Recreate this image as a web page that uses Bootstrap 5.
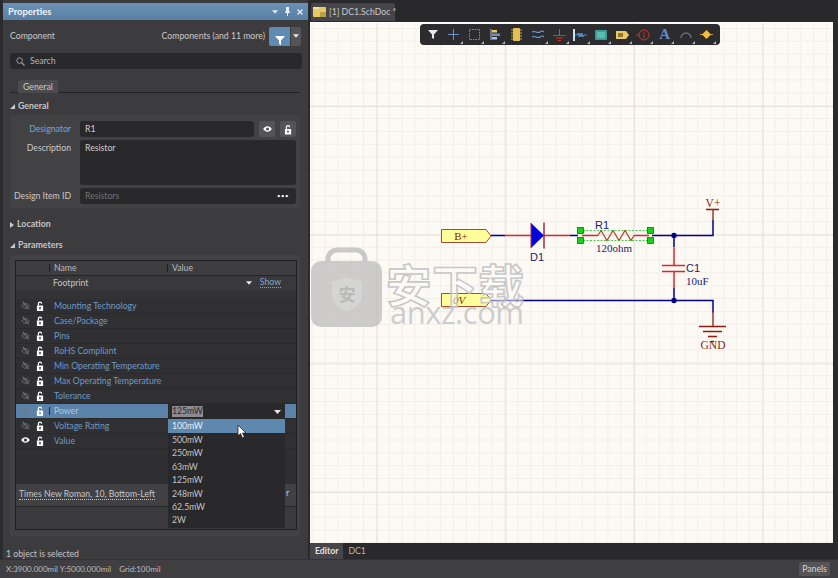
<!DOCTYPE html>
<html lang="en">
<head>
<meta charset="utf-8">
<title>Properties</title>
<link href="https://cdn.jsdelivr.net/npm/bootstrap@5.3.0/dist/css/bootstrap.min.css" rel="stylesheet">
<style>
html,body{margin:0;height:578px;width:838px;overflow:hidden}
body{background:#2b2a2d;font-family:Lato,"Open Sans","Liberation Sans",sans-serif;font-size:8.700px;line-height:1;color:#c9c9cb}
.app-main{height:559px}
.side{padding-top:3px;background:#3c3b3e;margin-right:2px;position:relative;margin-left:3px;width:305px;flex:none}
.side-title{height:17px;background:linear-gradient(#6b92b6,#587fa4);color:#eef3f8;font-weight:700;font-size:9.400px;padding:0 5px}
.side-title svg{margin-left:6px}
.comp-row{height:20px;margin:6px 7px 0 7px}
.filter-btn{width:21px;height:19px;background:#5f8ab2;border:0;padding:0;border-radius:2px 0 0 2px}
.filter-drop{width:10px;height:19px;background:#545357;border:0;padding:0;border-radius:0 2px 2px 0;margin-left:1px}
.search-box{height:16px;margin:7px 6px 0 7px;background:#29282b;border-radius:3px;padding-left:6px;gap:5px;color:#b5b5b7}
.tabs-wrap.nav-tabs{margin:11px 8px 0 7px;border-bottom:1px solid #232225;height:13px;padding-left:8px;--bs-nav-tabs-border-width:0}
.tabs-wrap .nav-link,.tabs-wrap .nav-link.active{background:#4b4a4e;color:#c9c9cb;font-size:8.700px;padding:3px 5px 0;height:13px;border-radius:2px 2px 0 0;border:0}
.sec-head{height:13px;margin-left:7px;margin-top:7px;font-weight:700;color:#c4c4c8;gap:3px;font-size:8.800px}
.sec-head.sec-loc{margin-top:10px}
.sec-head.sec-par{margin-top:8px}
.group-box{background:#424144;margin:2px 8px 0 7px;border-radius:2px;padding:6px 4px 4px 0;height:93px}
.f-row{margin-bottom:3px}
.f-label{width:61px;margin-right:9px;padding-top:4px;flex:none;white-space:nowrap;display:flex;justify-content:flex-end}
.f-label.blue{color:#7aa5d0}
.f-input{flex:1;height:16px;background:#29282b;border-radius:3px;color:#cfcfd1;padding:4px 5px 0;margin:0}
.f-input.tall{height:45px}
.f-input.dim{color:#737276}
.dots-t{font-size:6px;color:#fff;letter-spacing:.5px;padding-top:1px;padding-right:2px}
.sq-btn{width:16px;height:16px;background:#545357;border:0;padding:0;border-radius:2px;margin-left:5px;flex:none}
.param-box{background:#424144;margin:3px 8px 0 7px;height:281px;padding:5px 4px 0 5px;border-radius:2px}
.param-tbl{height:270px;background:#2f2e31;border:1px solid #1f1e21;position:relative;width:282px}
.param-tbl > div{flex:none}
.p-head{height:15px;background:#3e3d40;border-bottom:1px solid #242326;color:#b9b9bb}
.c-a{width:33px;flex:none}.c-n{width:118px;flex:none;padding-left:4px}.c-v{flex:1;padding-left:4px}
.c-n.bar,.c-v.bar{border-left:1px solid #1f1e21}
.p-foot{height:14px;background:#39383b;color:#c4c4c6}
.show-link{color:#7fa7cd;border-bottom:1px dotted #7fa7cd;margin-right:15px;padding-bottom:1px}
.p-gap{height:9px;background:#333235}
.p-row{height:15px;color:#6f9ac4;border-bottom:1px solid #2a292c;background:#302f32}
.p-row .c-n{border-left:1px solid #2a292c;white-space:nowrap}
.p-row .c-v{border-left:1px solid #2a292c}
.p-row.sel{background:#5b83a9;color:#a9c8e4}
.ic-cell{gap:6px;padding-left:5px}
.sel-val{position:absolute;left:152px;top:143px;width:117px;height:15px;background:#29282b;padding-left:4px}
.sel-val span{background:#8b8a8d;color:#2c2b2e;padding:1px 0}
.dropdown-menu.val-menu{display:block;position:absolute;left:152px;top:158px;width:117px;min-width:0;height:109px;background:#29282b;border:0;border-radius:0;padding:0;margin:0;z-index:3;font-size:8.700px}
.val-menu .dropdown-item{height:13.400px;padding:3px 4px 0;color:#c4c4c6;font-size:8.700px;line-height:1}
.val-menu .dropdown-item.active{background:#5f88ae;color:#e8eff6;height:14px}
.p-empty{height:35px;background:#2f2e31}
.p-font{height:22px;background:#414043;padding-left:3px;color:#c6c6c8}
.p-font span{border-bottom:1px dotted #c6c6c8;padding-bottom:1px}
.p-bottom{height:23px;background:#3b3a3d;border-top:1px solid #262528}
.cut-r{position:absolute;left:270px;top:228px;color:#c6c6c8}
.m-pointer{position:absolute;left:221px;top:163px;z-index:4}
.sel-note{margin:14px 0 0 3px;color:#c4c4c6}
.right-col{width:525px}
.doc-tabs{height:22px;padding-top:3px;padding-left:1px;background:#29282b}
.doc-tab{height:18px;width:84px;background:#464549;border-radius:2px 2px 0 0;gap:3px;padding-left:2px;color:#c9c9cb;white-space:nowrap}
.doc-tab svg{flex:none}
.canvas-area{height:521px;width:522.500px;position:relative;overflow:hidden;border-top:1px solid #fff;background-color:#fdfaf6;background-image:linear-gradient(#e6e1db 1px,transparent 1px),linear-gradient(90deg,#e6e1db 1px,transparent 1px),linear-gradient(#f2eee8 1px,transparent 1px),linear-gradient(90deg,#f2eee8 1px,transparent 1px);background-size:128.700px 128.700px,128.700px 128.700px,12.870px 12.870px,12.870px 12.870px;background-position:66.700px 83px,66.700px 83px,1.600px 5px,1.600px 5px}
.sch{position:absolute;left:0;top:0;width:525px;height:520px}
.sch text{font-family:"Liberation Serif",serif}
.sch .sans-t{font-family:"Liberation Sans",sans-serif}
.sch .wm-cn{font-family:"Noto Sans CJK SC",sans-serif;font-weight:700}
.sch .wm-en{font-family:"Open Sans",sans-serif}
.tool-bar{position:absolute;left:110px;top:1px;width:300px;height:21px;background:#2c2b2e;border-radius:4px;padding-left:2px}
.tool-item{width:21.100px;height:21px;position:relative;flex:none;align-items:center;justify-content:center}
.tool-item.more::after{content:"";position:absolute;right:1px;bottom:1px;border-left:3px solid transparent;border-bottom:3px solid #b9b9bb}
.tool-a{font-family:"Liberation Serif",serif;font-weight:700;font-size:15px;color:#5d8fd0}
.bottom-tabs{height:16px;background:#29282b}
.btm-tab{padding:4px 5px 0;height:16px;color:#b7b7b9}
.btm-tab.on{background:#464549;color:#e1e1e3;font-weight:700}
.status-bar{height:19px;background:#3f3e41;padding-left:6px;color:#bdbdbf;border-top:1px solid #333235;font-size:8px}
.panels-btn{height:14px;width:31px;background:#555458;color:#d5d5d7;border:0;padding:0;font-size:8.700px;line-height:1;border-radius:2px;margin-right:8px}
</style>
</head>
<body>
<svg width="0" height="0" class="position-absolute">
<defs>
<symbol id="i-lock" viewBox="0 0 9 11"><path d="M2 5V3a2.500 2.500 0 0 1 5 0h-1.400a1.100 1.100 0 0 0-2.200 0v2z" fill="#fff"/><path fill-rule="evenodd" d="M1 5h7v6H1zM4.500 6.600a1 1 0 0 0-.5 1.900v1h1v-1a1 1 0 0 0-.5-1.900z" fill="#fff"/></symbol>
<symbol id="i-eye" viewBox="0 0 10 8"><path fill-rule="evenodd" d="M5 1C2.600 1 1 2.800.3 4 1 5.200 2.600 7 5 7s4-1.800 4.700-3C9 2.800 7.400 1 5 1zm0 1.300a1.700 1.700 0 1 1 0 3.400 1.700 1.700 0 0 1 0-3.400z" fill="#fff"/></symbol>
<symbol id="i-off" viewBox="0 0 10 10"><path d="M1 5.500C2 4 3.300 3 5 3s3 1 4 2.500C8 7 6.700 8 5 8S2 7 1 5.500z" fill="none" stroke="#77767a" stroke-width="1"/><path d="M2 1l6.500 8" stroke="#77767a" stroke-width="1.200"/></symbol>
<symbol id="i-caret" viewBox="0 0 7 4"><path d="M0 0h7L3.500 4z" fill="#e8e8ea"/></symbol>
</defs>
</svg>
<div class="app-main d-flex">
<aside class="side d-flex flex-column">
  <div class="side-title d-flex align-items-center">
    <span class="flex-fill">Properties</span>
    <svg width="6" height="4"><use href="#i-caret"/></svg>
    <svg width="7" height="9" viewBox="0 0 7 9"><path d="M2 0h3v4l1 1v1H4v3H3V6H1V5l1-1z" fill="#e8eef5"/></svg>
    <svg width="6" height="6" viewBox="0 0 6 6"><path d="M.5.500l5 5M5.500.500l-5 5" stroke="#e8eef5" stroke-width="1.300"/></svg>
  </div>
  <div class="comp-row d-flex align-items-center">
    <span class="flex-fill">Component</span>
    <span class="me-1">Components (and 11 more)</span>
    <button class="filter-btn btn" type="button" aria-label="Filter"><svg width="10" height="9" viewBox="0 0 10 9"><path d="M0 0h10L6 4.500V9L4 8V4.500z" fill="#fff"/></svg></button>
    <button class="filter-drop btn" type="button" aria-label="More"><svg width="6" height="4" class="d-block mx-auto"><use href="#i-caret"/></svg></button>
  </div>
  <div class="search-box d-flex align-items-center">
    <svg width="9" height="9" viewBox="0 0 9 9"><circle cx="3.600" cy="3.600" r="2.800" fill="none" stroke="#9a9a9c" stroke-width="1"/><path d="M5.700 5.700L8.500 8.500" stroke="#9a9a9c" stroke-width="1.300"/></svg>
    <span>Search</span>
  </div>
  <ul class="nav nav-tabs tabs-wrap"><li class="nav-item"><a class="nav-link active" href="#">General</a></li></ul>
  <div class="sec-head d-flex align-items-center"><svg width="5" height="5" viewBox="0 0 5 5"><path d="M5 0v5H0z" fill="#c9c9cb"/></svg>General</div>
  <div class="group-box">
    <div class="f-row d-flex"><div class="f-label blue">Designator</div><div class="f-input">R1</div>
      <button class="sq-btn btn" type="button" aria-label="Visible"><svg width="9" height="8" class="d-block mx-auto"><use href="#i-eye"/></svg></button>
      <button class="sq-btn btn" type="button" aria-label="Lock"><svg width="8" height="11" class="d-block mx-auto"><use href="#i-lock"/></svg></button></div>
    <div class="f-row d-flex"><div class="f-label">Description</div><div class="f-input tall">Resistor</div></div>
    <div class="f-row d-flex"><div class="f-label">Design Item ID</div><div class="f-input dim d-flex justify-content-between"><span>Resistors</span><span class="dots-t">•••</span></div></div>
  </div>
  <div class="sec-head sec-loc d-flex align-items-center"><svg width="4" height="6" viewBox="0 0 4 6"><path d="M0 0l4 3-4 3z" fill="#c9c9cb"/></svg>Location</div>
  <div class="sec-head sec-par d-flex align-items-center"><svg width="5" height="5" viewBox="0 0 5 5"><path d="M5 0v5H0z" fill="#c9c9cb"/></svg>Parameters</div>
  <div class="param-box">
    <div class="param-tbl d-flex flex-column">
      <div class="p-head d-flex align-items-center"><div class="c-a"></div><div class="c-n bar">Name</div><div class="c-v bar">Value</div></div>
      <div class="p-foot d-flex align-items-center"><div class="c-a"></div><div class="c-n">Footprint</div><div class="c-v d-flex justify-content-end align-items-center"><svg width="6" height="4" class="me-2"><use href="#i-caret"/></svg><span class="show-link">Show</span></div></div>
      <div class="p-gap"></div>
      <div class="p-row d-flex align-items-center"><div class="c-a ic-cell d-flex"><svg width="9" height="9"><use href="#i-off"/></svg><svg width="8" height="10"><use href="#i-lock"/></svg></div><div class="c-n">Mounting Technology</div><div class="c-v"></div></div>
      <div class="p-row d-flex align-items-center"><div class="c-a ic-cell d-flex"><svg width="9" height="9"><use href="#i-off"/></svg><svg width="8" height="10"><use href="#i-lock"/></svg></div><div class="c-n">Case/Package</div><div class="c-v"></div></div>
      <div class="p-row d-flex align-items-center"><div class="c-a ic-cell d-flex"><svg width="9" height="9"><use href="#i-off"/></svg><svg width="8" height="10"><use href="#i-lock"/></svg></div><div class="c-n">Pins</div><div class="c-v"></div></div>
      <div class="p-row d-flex align-items-center"><div class="c-a ic-cell d-flex"><svg width="9" height="9"><use href="#i-off"/></svg><svg width="8" height="10"><use href="#i-lock"/></svg></div><div class="c-n">RoHS Compliant</div><div class="c-v"></div></div>
      <div class="p-row d-flex align-items-center"><div class="c-a ic-cell d-flex"><svg width="9" height="9"><use href="#i-off"/></svg><svg width="8" height="10"><use href="#i-lock"/></svg></div><div class="c-n">Min Operating Temperature</div><div class="c-v"></div></div>
      <div class="p-row d-flex align-items-center"><div class="c-a ic-cell d-flex"><svg width="9" height="9"><use href="#i-off"/></svg><svg width="8" height="10"><use href="#i-lock"/></svg></div><div class="c-n">Max Operating Temperature</div><div class="c-v"></div></div>
      <div class="p-row d-flex align-items-center"><div class="c-a ic-cell d-flex"><svg width="9" height="9"><use href="#i-off"/></svg><svg width="8" height="10"><use href="#i-lock"/></svg></div><div class="c-n">Tolerance</div><div class="c-v"></div></div>
      <div class="p-row sel d-flex align-items-center"><div class="c-a ic-cell d-flex"><svg width="9" height="9"><use href="#i-off"/></svg><svg width="8" height="10"><use href="#i-lock"/></svg></div><div class="c-n">Power</div><div class="c-v"></div></div>
      <div class="p-row d-flex align-items-center"><div class="c-a ic-cell d-flex"><svg width="9" height="9"><use href="#i-off"/></svg><svg width="8" height="10"><use href="#i-lock"/></svg></div><div class="c-n">Voltage Rating</div><div class="c-v"></div></div>
      <div class="p-row d-flex align-items-center"><div class="c-a ic-cell d-flex"><svg width="9" height="8"><use href="#i-eye"/></svg><svg width="8" height="10"><use href="#i-lock"/></svg></div><div class="c-n">Value</div><div class="c-v"></div></div>
      <div class="p-empty"></div>
      <div class="p-font d-flex align-items-center"><span>Times New Roman, 10, Bottom-Left</span></div>
      <div class="p-bottom"></div>
      <div class="sel-val d-flex align-items-center justify-content-between"><span>125mW</span><svg width="7" height="4" class="me-1"><use href="#i-caret"/></svg></div>
      <ul class="dropdown-menu show val-menu">
        <li><a class="dropdown-item active" href="#">100mW</a></li>
        <li><a class="dropdown-item" href="#">500mW</a></li>
        <li><a class="dropdown-item" href="#">250mW</a></li>
        <li><a class="dropdown-item" href="#">63mW</a></li>
        <li><a class="dropdown-item" href="#">125mW</a></li>
        <li><a class="dropdown-item" href="#">248mW</a></li>
        <li><a class="dropdown-item" href="#">62.5mW</a></li>
        <li><a class="dropdown-item" href="#">2W</a></li>
      </ul>
      <span class="cut-r">r</span>
      <svg class="m-pointer" width="10" height="15" viewBox="0 0 10 15"><path d="M1 1v11l2.600-2.400L5.400 14l2-.8-1.800-4.200H9z" fill="#fff" stroke="#222" stroke-width=".8"/></svg>
    </div>
  </div>
  <div class="sel-note">1 object is selected</div>
</aside>
<div class="right-col d-flex flex-column">
  <div class="doc-tabs d-flex">
    <div class="doc-tab d-flex align-items-center">
      <svg width="13" height="10" viewBox="0 0 13 10"><rect width="13" height="10" rx="1" fill="#e9c964"/><path d="M7 5h6v5H7z" fill="#b9a04a"/><path d="M0 0h6v2H0z" fill="#f4e19b"/></svg>
      <span>[1] DC1.SchDoc *</span>
    </div>
  </div>
  <div class="canvas-area">
    <svg class="sch" viewBox="310 23 525 520" xmlns="http://www.w3.org/2000/svg">
      <path d="M441.500 229.500H486L491 236 486 242.500H441.500z" fill="#ffff99" stroke="#8a1f11" stroke-width=".8"/>
      <path d="M441.500 293.500H486L491 300 486 306.500H441.500z" fill="#ffff99" stroke="#8a1f11" stroke-width=".8"/>
      <text x="461" y="240" font-size="11" text-anchor="middle" fill="#8a1f11">B+</text>
      <text x="459" y="304" font-size="11" text-anchor="middle" fill="#8a1f11" font-style="italic">0V</text>
      <g fill="none" stroke="#00008b" stroke-width="1.500">
        <path d="M491 235.500h14M570 235.500h8M652 235.500h61V220"/>
        <path d="M491 300.500h222v12M674 235.500v12M674 288v12"/>
      </g>
      <g fill="none" stroke="#d92a2a" stroke-width="1.500">
        <path d="M505 235.500h26M544 235.500h26M582 235.500h16M634 235.500h15"/>
        <path d="M674 248v17M674 272v16"/>
        <path d="M662 265.500h23M662 271.500h23"/>
      </g>
      <path d="M598 235.500l3-5 6 10 6-10 6 10 6-10 6 10 3-5" fill="none" stroke="#b0432f" stroke-width="1.200"/>
      <path d="M531 223l13 12.500-13 12.500z" fill="#0000e0"/>
      <path d="M531 223v25" stroke="#c02a2a" stroke-width="1"/>
      <path d="M544 222.500v26" stroke="#8b1a1a" stroke-width="1.300"/>
      <g fill="none" stroke="#8a1f11" stroke-width="1.300">
        <path d="M713 220v-10.500M706 209.500h13"/>
        <path d="M713 312v14M699 326.500h27M703 331.500h19M708 336.500h9M711 341.500h3"/>
      </g>
      <circle cx="674" cy="235.500" r="2.700" fill="#00008b"/>
      <circle cx="674" cy="300.500" r="2.700" fill="#00008b"/>
      <path d="M583 230.500h65M583 240.500h65" stroke="#38c538" stroke-width=".9" stroke-dasharray="2 1.500" fill="none"/>
      <g fill="#17d017" stroke="#0a5a0a" stroke-width=".7">
        <rect x="577.500" y="227.500" width="6" height="6"/><rect x="577.500" y="237.500" width="6" height="6"/>
        <rect x="647.500" y="227.500" width="6" height="6"/><rect x="647.500" y="237.500" width="6" height="6"/>
      </g>
      <g font-size="11" fill="#1a1a70">
        <text class="sans-t" x="595" y="229">R1</text>
        <text x="596" y="252">120ohm</text>
        <text class="sans-t" x="530" y="261">D1</text>
        <text class="sans-t" x="686" y="272">C1</text>
        <text x="686" y="285">10uF</text>
      </g>
      <text x="713" y="207" font-size="11.500" text-anchor="middle" fill="#8a1f11">V+</text>
      <text x="713" y="349" font-size="11.500" text-anchor="middle" fill="#8a1f11">GND</text>
      <g opacity=".92">
        <path d="M328 262v-3a9 9 0 0 1 9-9h19a9 9 0 0 1 9 9v3" fill="none" stroke="#c6c6c6" stroke-width="5"/>
        <rect x="311" y="261" width="71" height="66" rx="10" fill="#bfbfbf" opacity=".85"/>
        <path d="M347 277l15 5v13c0 9-8 14-15 17-7-3-15-8-15-17v-13z" fill="#d2d2d2"/>
        <text class="wm-cn" x="347" y="301" font-size="17" text-anchor="middle" fill="#b4b4b4">安</text>
        <text class="wm-cn" x="386" y="303" font-size="45.500" fill="#fff" fill-opacity=".55" stroke="#c4c4c4" stroke-width="1.600" textLength="138">安下载</text>
        <text class="wm-en" x="390" y="324" font-size="31" fill="#c2c2c2" fill-opacity=".85" textLength="134">anxz.com</text>
      </g>
    </svg>
    <div class="tool-bar d-flex align-items-center">
      <div class="tool-item d-flex"><svg width="10" height="9" viewBox="0 0 10 9"><path d="M0 0h10L6 4.500V9L4 8V4.500z" fill="#e9e9ea"/></svg></div>
      <div class="tool-item d-flex more"><svg width="11" height="11" viewBox="0 0 11 11"><path d="M5.500 0v11M0 5.500h11" stroke="#6d90c8"/></svg></div>
      <div class="tool-item d-flex more"><svg width="11" height="11" viewBox="0 0 11 11"><rect x=".5" y=".5" width="10" height="10" fill="none" stroke="#6d90c8" stroke-dasharray="1.500 1"/></svg></div>
      <div class="tool-item d-flex more"><svg width="11" height="11" viewBox="0 0 11 11"><path d="M1 0v11" stroke="#a9c4e6"/><rect x="2" y="1" width="5" height="2.500" fill="#e9c964"/><rect x="2" y="4.500" width="8" height="2.500" fill="#6d90c8"/><rect x="2" y="8" width="5" height="2.500" fill="#a9c4e6"/></svg></div>
      <div class="tool-item d-flex"><svg width="11" height="13" viewBox="0 0 11 13"><rect x="2" y="0" width="7" height="13" rx="1" fill="#e7bf4f"/><path d="M0 2h2M0 5h2M0 8h2M0 11h2M9 2h2M9 5h2M9 8h2M9 11h2" stroke="#c9a840"/></svg></div>
      <div class="tool-item d-flex more"><svg width="12" height="9" viewBox="0 0 12 9"><path d="M0 2c3-2 5 2 8 0s3-1 4 0M0 7c3-2 5 2 8 0s3-1 4 0" fill="none" stroke="#6d9fd0" stroke-width="1.100"/></svg></div>
      <div class="tool-item d-flex more"><svg width="13" height="12" viewBox="0 0 13 12"><path d="M6.500 0v6" stroke="#d8453a"/><path d="M0 6.500h13M3 9h7M5 11.500h3" stroke="#c9392e" stroke-width="1.200"/></svg></div>
      <div class="tool-item d-flex more"><svg width="14" height="12" viewBox="0 0 14 12"><rect x="0" y="0" width="2" height="12" fill="#cfe0f5"/><path d="M2 6h2l1-2 1 4 1-4 1 4 1-4 1 4 1-2h3" fill="none" stroke="#5d8fd0"/></svg></div>
      <div class="tool-item d-flex more"><svg width="12" height="10" viewBox="0 0 12 10"><rect width="12" height="10" rx="1" fill="#3f9c92"/><rect x="2" y="2" width="8" height="6" fill="#58bcae"/></svg></div>
      <div class="tool-item d-flex more"><svg width="13" height="8" viewBox="0 0 13 8"><path d="M0 0h10l3 4-3 4H0z" fill="#e9c964"/><rect x="2" y="2" width="5" height="4" fill="#8f7a33"/></svg></div>
      <div class="tool-item d-flex more"><svg width="14" height="12" viewBox="0 0 14 12"><circle cx="8" cy="6" r="5" fill="none" stroke="#c9392e"/><path d="M8 3v1.500M8 5.500V9M0 6h3" stroke="#c9392e"/></svg></div>
      <div class="tool-item d-flex more"><span class="tool-a">A</span></div>
      <div class="tool-item d-flex more"><svg width="12" height="7" viewBox="0 0 12 7"><path d="M1 7a5 5 0 0 1 10 0" fill="none" stroke="#6c6f76" stroke-width="1.300"/></svg></div>
      <div class="tool-item d-flex more"><svg width="13" height="9" viewBox="0 0 13 9"><path d="M0 4.500h13" stroke="#c99a3a"/><path d="M6.500 0L11 4.500 6.500 9 2 4.500z" fill="#f0bd3f"/></svg></div>
    </div>
  </div>
  <div class="bottom-tabs d-flex">
    <div class="btm-tab on">Editor</div>
    <div class="btm-tab">DC1</div>
  </div>
</div>
</div>
<div class="status-bar d-flex align-items-center">
  <span>X:3900.000mil Y:5000.000mil</span><span class="ms-2 flex-fill">Grid:100mil</span>
  <button class="panels-btn btn" type="button">Panels</button>
</div>
</body>
</html>
